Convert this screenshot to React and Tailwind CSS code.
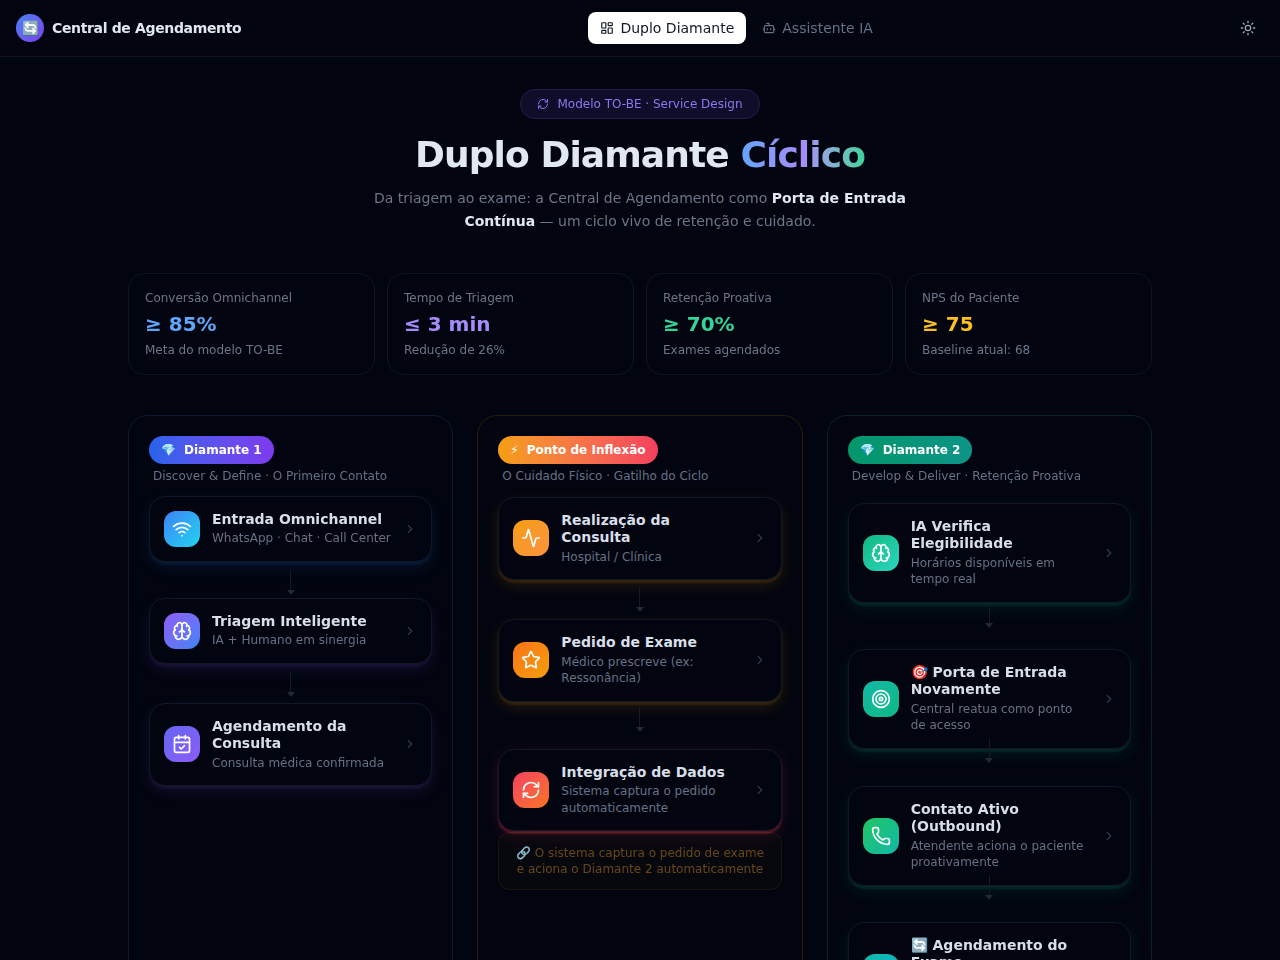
import {
    Activity,
    Bot,
    Brain,
    CalendarCheck,
    ChevronRight,
    LayoutDashboard,
    Phone,
    RefreshCw,
    Star,
    Sun,
    Target,
    Wifi,
} from "lucide-react";

const stats = [
    { label: "Conversão Omnichannel", value: "≥ 85%", note: "Meta do modelo TO-BE", color: "text-[#60a5fa]" },
    { label: "Tempo de Triagem", value: "≤ 3 min", note: "Redução de 26%", color: "text-[#a78bfa]" },
    { label: "Retenção Proativa", value: "≥ 70%", note: "Exames agendados", color: "text-[#34d399]" },
    { label: "NPS do Paciente", value: "≥ 75", note: "Baseline atual: 68", color: "text-[#fbbf24]" },
];

const BLUE_GLOW = "shadow-[0_3px_2px_rgba(59,130,246,0.09),0_6px_16px_0_rgba(59,130,246,0.11)]";
const VIOLET_GLOW = "shadow-[0_3px_2px_rgba(139,92,246,0.09),0_6px_16px_0_rgba(139,92,246,0.11)]";
const AMBER_GLOW = "shadow-[0_3px_2px_rgba(245,158,11,0.12),0_6px_16px_0_rgba(245,158,11,0.13)]";
const ROSE_GLOW = "shadow-[0_3px_2px_rgba(244,63,94,0.26),0_4px_16px_0_rgba(244,63,94,0.16)]";
const GREEN_GLOW = "shadow-[0_3px_2px_rgba(16,185,129,0.13),0_6px_16px_0_rgba(16,185,129,0.11)]";

const columns = [
    {
        badge: "💎",
        title: "Diamante 1",
        subtitle: "Discover & Define · O Primeiro Contato",
        border: "border-[#0e1a33]",
        badgeBg: "bg-gradient-to-r from-[#2563eb] to-[#7c3aed]",
        cards: [
            {
                Icon: Wifi,
                title: "Entrada Omnichannel",
                text: "WhatsApp · Chat · Call Center",
                iconBg: "bg-gradient-to-br from-[#3b82f6] to-[#22d3ee]",
                glow: BLUE_GLOW,
                top: "mt-3",
                line: "mt-2 mb-[3px]",
            },
            {
                Icon: Brain,
                title: "Triagem Inteligente",
                text: "IA + Humano em sinergia",
                iconBg: "bg-gradient-to-br from-[#8b5cf6] to-[#3b82f6]",
                glow: VIOLET_GLOW,
                line: "mt-2 mb-[6px]",
            },
            {
                Icon: CalendarCheck,
                title: "Agendamento da Consulta",
                text: "Consulta médica confirmada",
                iconBg: "bg-gradient-to-br from-[#6366f1] to-[#8b5cf6]",
                glow: VIOLET_GLOW,
            },
        ],
    },
    {
        badge: "⚡",
        title: "Ponto de Inflexão",
        subtitle: "O Cuidado Físico · Gatilho do Ciclo",
        border: "border-[#2a1c0c]",
        badgeBg: "bg-gradient-to-r from-[#f59e0b] to-[#f43f5e]",
        cards: [
            {
                Icon: Activity,
                title: "Realização da Consulta",
                text: "Hospital / Clínica",
                iconBg: "bg-gradient-to-br from-[#f59e0b] to-[#fb923c]",
                glow: AMBER_GLOW,
                top: "mt-[13px]",
                line: "mt-[7px] mb-[7px]",
            },
            {
                Icon: Star,
                title: "Pedido de Exame",
                text: "Médico prescreve (ex: Ressonância)",
                iconBg: "bg-gradient-to-br from-[#f97316] to-[#f59e0b]",
                glow: AMBER_GLOW,
                line: "mt-[5px] mb-[17px]",
            },
            {
                Icon: RefreshCw,
                title: "Integração de Dados",
                text: "Sistema captura o pedido automaticamente",
                iconBg: "bg-gradient-to-br from-[#f43f5e] to-[#f97316]",
                glow: ROSE_GLOW,
            },
        ],
        note: true,
    },
    {
        badge: "💎",
        title: "Diamante 2",
        subtitle: "Develop & Deliver · Retenção Proativa",
        border: "border-[#0a2421]",
        badgeBg: "bg-gradient-to-r from-[#059669] to-[#0d9488]",
        cards: [
            {
                Icon: Brain,
                title: "IA Verifica Elegibilidade",
                text: "Horários disponíveis em tempo real",
                iconBg: "bg-gradient-to-br from-[#10b981] to-[#2dd4bf]",
                glow: GREEN_GLOW,
                top: "mt-[19px]",
                line: "mt-0 mb-[21px]",
            },
            {
                Icon: Target,
                title: "🎯 Porta de Entrada Novamente",
                text: "Central reatua como ponto de acesso",
                iconBg: "bg-gradient-to-br from-[#14b8a6] to-[#10b981]",
                glow: GREEN_GLOW,
                line: "-mt-[11px] mb-[23px]",
            },
            {
                Icon: Phone,
                title: "Contato Ativo (Outbound)",
                text: "Atendente aciona o paciente proativamente",
                iconBg: "bg-gradient-to-br from-[#22c55e] to-[#14b8a6]",
                glow: GREEN_GLOW,
                line: "-mt-[11px] mb-[22px]",
            },
            {
                Icon: RefreshCw,
                title: "🔄 Agendamento do Exame",
                text: "Ciclo reinicia com o paciente retido",
                iconBg: "bg-gradient-to-br from-[#14b8a6] to-[#06b6d4]",
                glow: GREEN_GLOW,
            },
        ],
    },
];

function Connector({ className }) {
    return (
        <div className={`relative z-10 flex flex-col items-center ${className}`}>
            <div className="w-px h-5 bg-[#141a26]" />
            <div className="w-0 h-0 border-x-4 border-x-transparent border-t-[5px] border-t-[#222834]" />
        </div>
    );
}

function FlowCard({ card }) {
    const { Icon } = card;

    return (
        <div
            className={`flex items-center gap-3 p-3.5 rounded-2xl border border-[#111726] bg-[#02050f] ${card.glow} ${card.top || ""}`}
        >
            <div className={`w-9 h-9 shrink-0 rounded-xl flex items-center justify-center ${card.iconBg}`}>
                <Icon size={20} className="text-white" strokeWidth={2} />
            </div>

            <div className="flex-1 min-w-0">
                <div className="text-sm font-bold leading-tight text-[#d8dfe9]">
                    {card.title}
                </div>
                <div className="mt-0.5 text-xs leading-snug text-[#667185]">
                    {card.text}
                </div>
            </div>

            <ChevronRight size={14} className="shrink-0 text-[#323a49]" />
        </div>
    );
}

function Column({ column }) {
    return (
        <div className={`h-[800px] p-5 rounded-[20px] border bg-[#02050f] ${column.border}`}>
            <div className={`inline-flex items-center gap-2 h-7 px-3 rounded-full text-xs font-bold text-white ${column.badgeBg}`}>
                <span>{column.badge}</span>
                <span>{column.title}</span>
            </div>

            <p className="mt-1 px-1 text-xs text-[#667185]">
                {column.subtitle}
            </p>

            {column.cards.map((card) => (
                <div key={card.title}>
                    <FlowCard card={card} />
                    {card.line && <Connector className={card.line} />}
                </div>
            ))}

            {column.note && (
                <div className="mt-px p-3 rounded-xl border border-[#f59e0b]/[0.08] bg-[#f59e0b]/[0.025] text-center text-xs leading-4 text-[#69461a]">
                    🔗 O sistema captura o pedido de exame e aciona o Diamante 2 automaticamente
                </div>
            )}
        </div>
    );
}

export default function App() {
    return (
        <div className="h-screen overflow-hidden bg-[#02050f] font-['DejaVu_Sans',sans-serif]">
            <header className="h-[57px] px-4 flex items-center justify-between border-b border-[#10141f] [will-change:opacity]">
                <div className="flex items-center gap-2">
                    <div className="w-7 h-7 rounded-full flex items-center justify-center bg-gradient-to-br from-[#3b82f6] to-[#7c3aed] text-sm">
                        🔄
                    </div>
                    <span className="text-sm font-semibold tracking-tight text-[#e2e8f0]">
                        Central de Agendamento
                    </span>
                </div>

                <nav className="flex items-center gap-1">
                    <button className="h-8 px-3 flex items-center gap-1.5 rounded-lg bg-white text-sm text-[#111827]">
                        <LayoutDashboard size={14} />
                        Duplo Diamante
                    </button>
                    <button className="h-8 px-3 flex items-center gap-1.5 rounded-lg text-sm text-[#667185]">
                        <Bot size={14} />
                        Assistente IA
                    </button>
                </nav>

                <button className="p-2 rounded-lg text-[#9ca3af]">
                    <Sun size={16} />
                </button>
            </header>

            <main className="max-w-5xl mx-auto pt-8 [will-change:opacity]">
                <section className="mb-10 flex flex-col items-center text-center">
                    <div className="h-[30px] px-4 flex items-center gap-2 rounded-full border border-[#211d4d] bg-[#0f0d2a] text-xs text-[#8b78ee]">
                        <RefreshCw size={12} />
                        Modelo TO-BE · Service Design
                    </div>

                    <h1 className="mt-4 text-4xl font-bold tracking-tight text-[#e2e8f0]">
                        Duplo Diamante{" "}
                        <span className="bg-gradient-to-r from-[#60a5fa] via-[#a78bfa] to-[#34d399] bg-clip-text text-transparent">
                            Cíclico
                        </span>
                    </h1>

                    <p className="mt-3 max-w-xl text-sm leading-relaxed text-[#6b7688]">
                        Da triagem ao exame: a Central de Agendamento como{" "}
                        <strong className="font-semibold text-[#e2e8f0]">Porta de Entrada Contínua</strong>
                        {" "}— um ciclo vivo de retenção e cuidado.
                    </p>
                </section>

                <section className="mb-10 grid grid-cols-4 gap-3">
                    {stats.map((stat) => (
                        <div key={stat.label} className="p-4 rounded-2xl border border-[#10141f] bg-[#02050f]">
                            <div className="text-xs text-[#6b7688]">
                                {stat.label}
                            </div>
                            <div className={`mt-1 text-xl font-bold ${stat.color}`}>
                                {stat.value}
                            </div>
                            <div className="mt-1 text-xs text-[#6b7688]">
                                {stat.note}
                            </div>
                        </div>
                    ))}
                </section>

                <section className="grid grid-cols-3 gap-6">
                    {columns.map((column) => (
                        <Column key={column.title} column={column} />
                    ))}
                </section>
            </main>
        </div>
    );
}
